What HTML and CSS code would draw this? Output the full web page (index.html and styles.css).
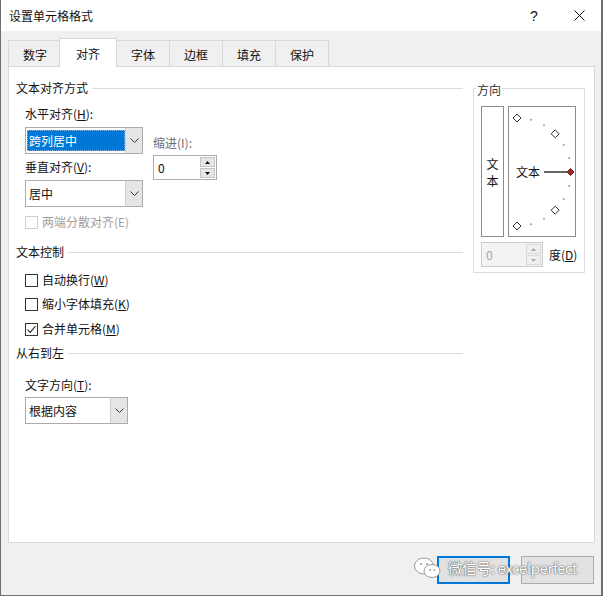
FILE: index.html
```html
<!DOCTYPE html>
<html lang="zh-CN">
<head>
<meta charset="utf-8">
<title>设置单元格格式</title>
<link rel="stylesheet" href="styles.css">
</head>
<body>
<div class="window">
  <div class="titlebar">
    <span class="title">设置单元格格式</span>
    <span class="tb-btn help">?</span>
    <span class="tb-btn close"><svg width="11" height="11" viewBox="0 0 11 11"><path d="M0.5 0.5L10.5 10.5M10.5 0.5L0.5 10.5" stroke="#111" stroke-width="1" fill="none"/></svg></span>
  </div>

  <div class="tabs">
    <div class="tab">数字</div>
    <div class="tab active">对齐</div>
    <div class="tab">字体</div>
    <div class="tab">边框</div>
    <div class="tab">填充</div>
    <div class="tab">保护</div>
  </div>

  <div class="panel">
    <div class="left-col">
      <div class="legend">文本对齐方式</div>

      <div class="align-block">
        <div class="align-main">
          <div class="label">水平对齐(<u>H</u>):</div>
          <div class="select sel-wide m5">
            <div class="sel-text"><span class="highlight">跨列居中</span></div>
            <div class="sel-arrow"><svg width="9" height="5" viewBox="0 0 9 5"><polyline points="0.5,0.5 4.5,4.5 8.5,0.5" fill="none" stroke="#333" stroke-width="1"/></svg></div>
          </div>
          <div class="label m5">垂直对齐(<u>V</u>):</div>
          <div class="select sel-wide m5">
            <div class="sel-text plain">居中</div>
            <div class="sel-arrow"><svg width="9" height="5" viewBox="0 0 9 5"><polyline points="0.5,0.5 4.5,4.5 8.5,0.5" fill="none" stroke="#333" stroke-width="1"/></svg></div>
          </div>
        </div>
        <div class="indent">
          <div class="label muted">缩进(I):</div>
          <div class="spin indent-spin">
            <div class="spin-val">0</div>
            <div class="spin-btns">
              <div class="spin-btn"><svg width="5" height="3" viewBox="0 0 5 3"><polygon points="2.5,0 5,3 0,3" fill="#111"/></svg></div>
              <div class="spin-btn"><svg width="5" height="3" viewBox="0 0 5 3"><polygon points="0,0 5,0 2.5,3" fill="#111"/></svg></div>
            </div>
          </div>
        </div>
      </div>

      <div class="check-row disabled first-check">
        <span class="box"></span><span>两端分散对齐(E)</span>
      </div>

      <div class="legend sec2">文本控制</div>
      <div class="check-row c1"><span class="box"></span><span>自动换行(<u>W</u>)</span></div>
      <div class="check-row c2"><span class="box"></span><span>缩小字体填充(<u>K</u>)</span></div>
      <div class="check-row c3"><span class="box"><svg width="11" height="11" viewBox="0 0 11 11"><polyline points="1.5,5.5 4.2,8.4 9.5,2" fill="none" stroke="#222" stroke-width="1.1"/></svg></span><span>合并单元格(<u>M</u>)</span></div>

      <div class="legend sec3">从右到左</div>
      <div class="label dir-label">文字方向(<u>T</u>):</div>
      <div class="select sel-dir">
        <div class="sel-text plain">根据内容</div>
        <div class="sel-arrow"><svg width="9" height="5" viewBox="0 0 9 5"><polyline points="0.5,0.5 4.5,4.5 8.5,0.5" fill="none" stroke="#333" stroke-width="1"/></svg></div>
      </div>
    </div>

    <div class="right-col">
      <div class="group">
        <div class="group-title">方向</div>
        <div class="orient">
          <div class="vtext"><span>文</span><span>本</span></div>
          <div class="dial">
            <svg width="66" height="129" viewBox="0 0 66 129">
              <g fill="#9c9c9c">
                <circle cx="21.98" cy="12.84" r="1"/>
                <circle cx="35" cy="18.23" r="1"/>
                <circle cx="54.77" cy="38" r="1"/>
                <circle cx="60.16" cy="51.02" r="1"/>
                <circle cx="60.16" cy="78.98" r="1"/>
                <circle cx="54.77" cy="92" r="1"/>
                <circle cx="35" cy="111.77" r="1"/>
                <circle cx="21.98" cy="117.16" r="1"/>
              </g>
              <g fill="#fff" stroke="#333" stroke-width="1">
                <polygon points="8,7 12,11 8,15 4,11"/>
                <polygon points="46.2,22.8 50.2,26.8 46.2,30.8 42.2,26.8"/>
                <polygon points="46.2,99.2 50.2,103.2 46.2,107.2 42.2,103.2"/>
                <polygon points="8,115 12,119 8,123 4,119"/>
              </g>
              <line x1="35" y1="65" x2="58" y2="65" stroke="#000" stroke-width="1.2"/>
              <polygon points="61.5,61.5 65,65 61.5,68.5 58,65" fill="#a4262c" stroke="#6e1a1e" stroke-width="1"/>
              <text x="7" y="69.5" class="dial-text">文本</text>
            </svg>
          </div>
        </div>
        <div class="deg-row">
          <div class="spin deg-spin">
            <div class="spin-val">0</div>
            <div class="spin-btns">
              <div class="spin-btn"><svg width="5" height="3" viewBox="0 0 5 3"><polygon points="2.5,0 5,3 0,3" fill="#aaa"/></svg></div>
              <div class="spin-btn"><svg width="5" height="3" viewBox="0 0 5 3"><polygon points="0,0 5,0 2.5,3" fill="#aaa"/></svg></div>
            </div>
          </div>
          <span class="deg-label">度(<u>D</u>)</span>
        </div>
      </div>
    </div>
  </div>

  <div class="buttons">
    <div class="btn default" role="button" aria-label="确定"></div>
    <div class="btn" role="button" aria-label="取消"></div>
  </div>

  <div class="watermark">
    <svg width="30" height="24" viewBox="0 0 30 24">
      <ellipse cx="11" cy="10" rx="9.5" ry="8" fill="#fff" stroke="#9a9a9a" stroke-width="1"/>
      <ellipse cx="19" cy="15" rx="8" ry="6.5" fill="#fff" stroke="#9a9a9a" stroke-width="1"/>
      <circle cx="8" cy="8" r="1.1" fill="#9a9a9a"/>
      <circle cx="14" cy="8" r="1.1" fill="#9a9a9a"/>
      <circle cx="17" cy="14" r="0.9" fill="#9a9a9a"/>
      <circle cx="21.5" cy="14" r="0.9" fill="#9a9a9a"/>
    </svg>
    <span class="wm-text">微信号: excelperfect</span>
  </div>
</div>
</body>
</html>
```

FILE: styles.css
```css
* { box-sizing: border-box; }

html, body {
  margin: 0;
  padding: 0;
  background: #f0f0f0;
}

body {
  width: 603px;
  height: 596px;
  overflow: hidden;
  font-family: "Noto Sans CJK SC", "Noto Sans", sans-serif;
  font-size: 12px;
  line-height: 16px;
  color: #111;
}

u { text-decoration: underline; text-underline-offset: 1px; }

.window {
  position: relative;
  width: 603px;
  height: 596px;
  background: #f0f0f0;
  border-left: 1px solid #6f6f6f;
  border-right: 2px solid #6f6f6f;
  border-bottom: 1px solid #6f6f6f;
  display: flex;
  flex-direction: column;
}

/* Title bar */
.titlebar {
  height: 31px;
  background: #fff;
  display: flex;
  align-items: center;
  padding-left: 8px;
}
.title { font-size: 12px; color: #111; }
.tb-btn {
  width: 46px;
  height: 31px;
  display: flex;
  align-items: center;
  justify-content: center;
}
.help {
  margin-left: auto;
  font-family: "Liberation Sans", sans-serif;
  font-size: 14px;
  color: #111;
}
.close { width: 44px; }

/* Tabs */
.tabs {
  margin-top: 7px;
  padding-left: 7px;
  height: 28px;
  display: flex;
  align-items: flex-end;
}
.tab {
  width: 54px;
  height: 26px;
  margin-left: -1px;
  border: 1px solid #d9d9d9;
  border-bottom: none;
  background: #f0f0f0;
  display: flex;
  justify-content: center;
  padding-top: 6px;
}
.tab:first-child { margin-left: 0; }
.tab.active {
  position: relative;
  z-index: 1;
  width: 58px;
  height: 29px;
  margin-left: -3px;
  margin-bottom: -1px;
  background: #fff;
  padding-top: 7px;
}

/* Panel */
.panel {
  margin-left: 7px;
  width: 587px;
  height: 477px;
  background: #fff;
  border: 1px solid #d9d9d9;
  padding: 13px 0 0 7px;
  display: grid;
  grid-template-columns: 448px 112px;
  column-gap: 9px;
  align-items: start;
}

.legend {
  display: flex;
  align-items: center;
  gap: 4px;
  height: 16px;
}
.legend::after {
  content: "";
  flex: 1;
  height: 1px;
  background: #dcdcdc;
  margin-right: 1px;
}
.sec2 { margin-top: 14px; }
.sec3 { margin-top: 8px; }

.label { height: 16px; white-space: nowrap; }
.muted { color: #6d6d6d; }
.m5 { margin-top: 5px; }

.align-block {
  display: flex;
  margin-left: 9px;
  margin-top: 10px;
}
.align-main { width: 118px; }
.indent {
  margin-left: 10px;
  padding-top: 29px;
}

.select {
  height: 27px;
  border: 1px solid #acacac;
  display: flex;
  background: #fff;
}
.sel-wide { width: 118px; }
.sel-dir { width: 103px; margin-left: 9px; margin-top: 4px; }
.sel-text {
  flex: 1;
  padding: 2px 0 2px 1px;
  display: flex;
}
.sel-text.plain { align-items: center; padding-left: 3px; }
.highlight {
  flex: 1;
  background: #0078d7;
  color: #fff;
  display: flex;
  align-items: center;
  padding-left: 2px;
  outline: 1px dotted #8ab8e6;
  outline-offset: -1px;
}
.sel-arrow {
  width: 17px;
  background: #e5e5e5;
  border-left: 1px solid #d0d0d0;
  display: flex;
  align-items: center;
  justify-content: center;
}

.spin {
  height: 25px;
  border: 1px solid #acacac;
  display: flex;
  background: #fff;
}
.indent-spin { width: 64px; margin-top: 4px; }
.spin-val {
  flex: 1;
  padding-left: 4px;
  display: flex;
  align-items: center;
}
.spin-btns {
  width: 16px;
  padding: 1px 1px 1px 0;
  display: flex;
  flex-direction: column;
  gap: 1px;
}
.spin-btn {
  flex: 1;
  background: #e6e6e6;
  border: 1px solid #c4c4c4;
  display: flex;
  align-items: center;
  justify-content: center;
}

.check-row {
  display: flex;
  align-items: center;
  gap: 4px;
  height: 16px;
  margin-left: 9px;
}
.check-row .box {
  width: 13px;
  height: 13px;
  border: 1px solid #333;
  background: #fff;
  display: flex;
  align-items: center;
  justify-content: center;
}
.check-row.disabled { color: #a0a0a0; }
.check-row.disabled .box { border-color: #cfcfcf; }
.first-check { margin-top: 7px; }
.c1 { margin-top: 12px; }
.c2 { margin-top: 8px; }
.c3 { margin-top: 9px; }

.dir-label { margin-left: 9px; margin-top: 16px; }

/* Orientation group */
.right-col { margin-top: 8px; }
.group {
  width: 112px;
  height: 185px;
  border: 1px solid #dcdcdc;
}
.group-title {
  width: fit-content;
  margin-top: -7px;
  margin-left: 2px;
  padding: 0 1px;
  background: #fff;
  color: #333;
}
.orient {
  display: flex;
  gap: 4px;
  margin-top: 8px;
  padding-left: 7px;
}
.vtext {
  width: 23px;
  height: 131px;
  border: 1px solid #8c8c8c;
  display: flex;
  flex-direction: column;
  align-items: center;
  justify-content: center;
  line-height: 17px;
}
.dial {
  width: 68px;
  height: 131px;
  border: 1px solid #8c8c8c;
}
.dial svg { display: block; }
.dial-text {
  font-family: "Noto Sans CJK SC", sans-serif;
  font-size: 12px;
  fill: #111;
}
.deg-row {
  display: flex;
  align-items: center;
  margin-top: 5px;
  padding-left: 7px;
}
.deg-spin {
  width: 62px;
  border-color: #cccccc;
  background: #f3f3f3;
  color: #a8a8a8;
}
.deg-spin .spin-btn { background: #f0f0f0; border-color: #dadada; }
.deg-label { margin-left: 6px; }

/* Buttons */
.buttons {
  margin-top: 13px;
  display: flex;
  justify-content: flex-end;
  gap: 11px;
  padding-right: 7px;
}
.btn {
  width: 73px;
  height: 28px;
  background: #e1e1e1;
  border: 1px solid #adadad;
}
.btn.default { border: 2px solid #0078d7; }

/* Watermark overlay */
.watermark {
  position: absolute;
  left: 412px;
  top: 555px;
  display: flex;
  align-items: center;
  gap: 5px;
  height: 26px;
  pointer-events: none;
}
.wm-text {
  font-size: 14.5px;
  color: #fff;
  letter-spacing: -0.2px;
  text-shadow: 0 0 1px #666, 0 0 1px #666, 0 0 2px #888;
}
```
